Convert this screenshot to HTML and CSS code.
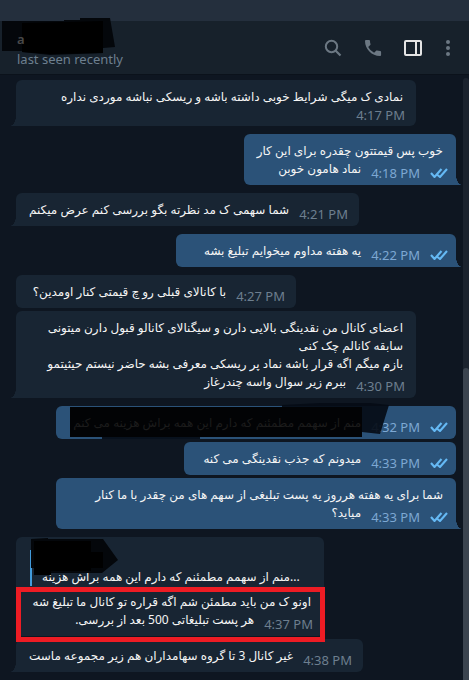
FILE: index.html
```html
<!DOCTYPE html>
<html lang="fa">
<head>
    <meta charset="UTF-8">
    <meta name="viewport" content="width=device-width, initial-scale=1.0">
    <title>Chat</title>
    <link rel="stylesheet" href="styles.css">
</head>
<body>
    <svg class="defs" aria-hidden="true">
        <symbol id="checks" viewBox="0 0 18 10">
            <path d="M1 5l3.500 4L11.500 1M7.500 7l2.500 2L17 1" fill="none" stroke="currentColor" stroke-width="2.100"/>
        </symbol>
    </svg>

    <div class="titlebar"></div>

    <header class="topbar">
        <div class="contact">
            <svg class="cover cover-name" viewBox="0 0 114 37" aria-hidden="true">
                <path d="M0 3L62 3L62 2L78 2L78 0L108 0L113 29L101 30L101 35L48 37L20 34L20 33L0 33Z" fill="#04070b"/>
                <path d="M20 5L62 4L101 3L101 35L48 36L20 34Z" fill="#000"/>
            </svg>
            <h1>a</h1>
            <p>last seen recently</p>
        </div>
        <div class="actions">
            <button type="button" aria-label="Search">
                <svg width="18" height="18" viewBox="0 0 18 18"><circle cx="7.500" cy="7.500" r="5.700" fill="none" stroke="currentColor" stroke-width="2"/><path d="M11.500 11.500l5 5" stroke="currentColor" stroke-width="2.200"/></svg>
            </button>
            <button type="button" aria-label="Call">
                <svg width="18" height="18" viewBox="0 0 18 18"><path d="M4.200 7.900a13.500 13.500 0 0 0 5.900 5.900l2-2c.2-.2.6-.3.900-.2 1 .3 2.100.5 3.200.5.500 0 .9.400.9.900V16c0 .5-.4.900-.9.900C7.900 17 1 10.100 1 1.900 1 1.400 1.400 1 1.900 1h3.200c.5 0 .9.400.9.900 0 1.100.2 2.200.5 3.200.1.300 0 .7-.2.900z" fill="currentColor"/></svg>
            </button>
            <button type="button" class="active" aria-label="Side panel">
                <svg width="18" height="16" viewBox="0 0 18 16"><rect x="1" y="1" width="16" height="14" rx="1" fill="none" stroke="currentColor" stroke-width="2"/><path d="M12 1v14" stroke="currentColor" stroke-width="2"/></svg>
            </button>
            <button type="button" class="more" aria-label="More">
                <svg width="4" height="16" viewBox="0 0 4 16" fill="currentColor"><circle cx="2" cy="2" r="2"/><circle cx="2" cy="8" r="2"/><circle cx="2" cy="14" r="2"/></svg>
            </button>
        </div>
    </header>

    <main class="chat">
        <div class="bubble in last full">
            <p>نمادی ک میگی شرایط خوبی داشته باشه و ریسکی نباشه موردی نداره</p>
            <div class="end below"><time>4:17 PM</time></div>
        </div>

        <div class="bubble out last">
            <p>خوب پس قیمتتون چقدره برای این کار</p>
            <div class="end"><p>نماد هامون خوبن</p><time>4:18 PM</time><svg class="checks"><use href="#checks"/></svg></div>
        </div>

        <div class="bubble in last">
            <div class="end"><p>شما سهمی ک مد نظرته بگو بررسی کنم عرض میکنم</p><time>4:21 PM</time></div>
        </div>

        <div class="bubble out last mid">
            <div class="end"><p>یه هفته مداوم میخوایم تبلیغ بشه</p><time>4:22 PM</time><svg class="checks"><use href="#checks"/></svg></div>
        </div>

        <div class="bubble in mid">
            <div class="end"><p>با کانالای قبلی رو چ قیمتی کنار اومدین؟</p><time>4:27 PM</time></div>
        </div>
        <div class="bubble in last full">
            <p>اعضای کانال من نقدینگی بالایی دارن و سیگنالای کانالو قبول دارن میتونی<br>سابقه کانالم چک کنی<br>بازم میگم اگه قرار باشه نماد پر ریسکی معرفی بشه حاضر نیستم حیثیتمو</p>
            <div class="end"><p>ببرم زیر سوال واسه چندرغاز</p><time>4:30 PM</time></div>
        </div>

        <div class="bubble out full">
            <div class="end"><p class="dim">منم از سهمم مطمئنم که دارم این همه براش هزینه می کنم</p><time>4:32 PM</time><svg class="checks"><use href="#checks"/></svg></div>
            <svg class="cover cover-text" viewBox="0 0 320 38" aria-hidden="true">
                <path d="M0 5L212 5L212 3L250 1L300 1L319 3L310 32L292 30L292 35L130 35L130 37L32 37L32 35L0 35Z" fill="#050c16" fill-opacity=".92"/>
                <path d="M0 5H292V35H0Z" fill="#020305"/>
            </svg>
        </div>
        <div class="bubble out short">
            <div class="end"><p>میدونم که جذب نقدینگی می کنه</p><time>4:33 PM</time><svg class="checks"><use href="#checks"/></svg></div>
        </div>
        <div class="bubble out last full">
            <p>شما برای یه هفته هرروز یه پست تبلیغی از سهم های من چقدر با ما کنار</p>
            <div class="end"><p>میاید؟</p><time>4:33 PM</time><svg class="checks"><use href="#checks"/></svg></div>
        </div>

        <div class="bubble in reply">
            <blockquote>منم از سهمم مطمئنم که دارم این همه براش هزینه...</blockquote>
            <p>اونو ک من باید مطمئن شم اگه قراره تو کانال ما تبلیغ شه</p>
            <div class="end"><p>هر پست تبلیغاتی 500 بعد از بررسی.</p><time>4:37 PM</time></div>
            <svg class="cover cover-quote" viewBox="0 0 87 38" aria-hidden="true">
                <path d="M0 1L17 0L17 1L72 1L87 22L71 35L20 35L20 37L3 37L3 30L0 30Z" fill="#04070b"/>
                <path d="M3 3H60V14H72V30H60V33H20V37H3Z" fill="#000"/>
            </svg>
            <div class="marker"></div>
        </div>
        <div class="bubble in last">
            <div class="end"><p>غیر کانال 3 تا گروه سهامداران هم زیر مجموعه ماست</p><time>4:38 PM</time></div>
        </div>

        <div class="scrollbar"><div class="thumb"></div></div>
    </main>
</body>
</html>
```

FILE: styles.css
```css
* {
    box-sizing: border-box;
}
body {
    margin: 0;
    min-height: 100vh;
    display: flex;
    flex-direction: column;
    background: #0e1621;
    color: #f5f5f5;
    font: 13px/18px "Noto Sans", "Open Sans", "DejaVu Sans", sans-serif;
}
h1, p, blockquote {
    margin: 0;
}
.defs {
    display: none;
}
.titlebar {
    height: 21px;
    background: #242f3d;
}
.topbar {
    height: 54px;
    padding: 0 19px 0 17px;
    display: flex;
    align-items: center;
    justify-content: space-between;
    background: #17212b;
    border-bottom: 1px solid #0b121b;
}
.contact {
    position: relative;
    color: #6d7f8f;
}
.contact h1 {
    position: relative;
    color: #4a4a4a;
    font-size: 13px;
    line-height: 22px;
    font-weight: 600;
}
.contact p {
    position: relative;
}
.actions {
    display: flex;
    align-items: center;
    gap: 22px;
}
button {
    display: flex;
    padding: 0;
    border: 0;
    background: none;
    color: #6c7883;
    cursor: pointer;
}
button.active {
    color: #e4e4e4;
}
.more {
    margin-left: 2px;
}
.chat {
    position: relative;
    flex: 1;
    display: flex;
    flex-direction: column;
    align-items: flex-start;
    gap: 3px;
    padding: 5px 13px 8px 16px;
}
.bubble {
    position: relative;
    padding: 8px 13px 7px;
    border-radius: 6px;
    background: #182533;
}
.bubble.last {
    margin-bottom: 5px;
}
.bubble.full {
    width: 400px;
    max-width: 100%;
}
.bubble.mid {
    min-width: 280px;
}
.bubble.short {
    min-width: 272px;
}
.bubble.reply {
    min-width: 308px;
}
.bubble p,
blockquote {
    font-size: 12px;
    white-space: nowrap;
}
.bubble p {
    direction: rtl;
}
.out {
    align-self: flex-end;
    background: #2b5278;
}
.end {
    display: flex;
    justify-content: flex-end;
    gap: 10px;
    margin-right: -2px;
}
.out .end {
    margin-right: -5px;
}
.end time {
    color: #6d7f8f;
    padding-top: 4px;
    margin-bottom: -4px;
    white-space: nowrap;
}
.below time {
    padding: 0;
    margin-bottom: -5px;
}
.out time {
    color: #7da8d3;
}
.checks {
    flex: none;
    width: 18px;
    height: 10px;
    margin-top: 8px;
    color: #65b9f4;
}
/* bubble tails */
.last::after {
    content: "";
    position: absolute;
    bottom: 0;
    width: 6px;
    height: 10px;
}
.in.last {
    border-bottom-left-radius: 0;
}
.in.last::after {
    left: -6px;
    background: radial-gradient(ellipse 6px 10px at 0 0, transparent 96%, #182533);
}
.out.last {
    border-bottom-right-radius: 0;
}
.out.last::after {
    right: -6px;
    background: radial-gradient(ellipse 6px 10px at 100% 0, transparent 96%, #2b5278);
}
blockquote {
    height: 36px;
    margin: 5px 0 7px 1px;
    padding: 18px 6px 0 10px;
    border-left: 2px solid #429bdb;
}
.dim {
    position: relative;
    z-index: 1;
    color: #1c1c1c;
}
.cover {
    position: absolute;
}
.cover-name {
    left: -15px;
    top: -10px;
    width: 114px;
}
.cover-text {
    left: 14px;
    top: -4px;
    width: 320px;
}
.cover-quote {
    left: 15px;
    top: 1px;
    width: 87px;
}
/* red frame around the reply */
.marker {
    position: absolute;
    top: 50px;
    right: -1px;
    bottom: -6px;
    left: 0;
    z-index: 1;
    border: 5px solid #ed1c24;
}
.scrollbar {
    position: absolute;
    top: 3px;
    right: 0;
    bottom: 2px;
    width: 6px;
    border-radius: 3px;
    background: #1b232e;
}
.thumb {
    position: absolute;
    top: 48%;
    bottom: 0;
    width: 100%;
    border-radius: 3px;
    background: #3b444f;
}
```
